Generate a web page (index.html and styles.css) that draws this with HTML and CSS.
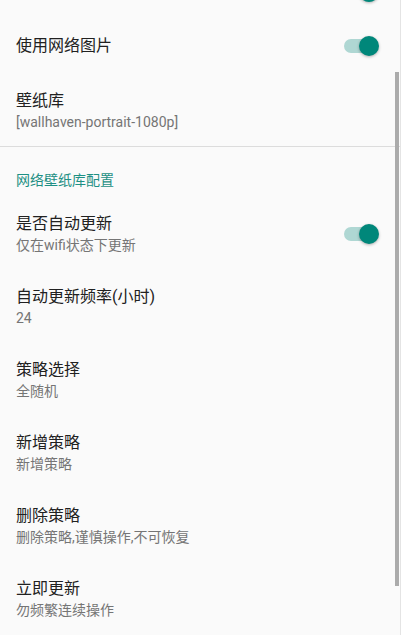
FILE: index.html
```html
<!DOCTYPE html>
<html lang="zh-CN">
<head>
    <meta charset="UTF-8">
    <meta name="viewport" content="width=device-width, initial-scale=1.0">
    <title>设置</title>
    <link rel="stylesheet" href="styles.css">
</head>
<body>
    <div class="screen">
        <div class="prefs">
            <!-- row scrolled above the top edge, only its switch peeks in -->
            <div class="pref single hidden-top">
                <div class="text"></div>
                <div class="switch on"><span class="track"></span><span class="thumb"></span></div>
            </div>

            <div class="pref single">
                <div class="text"><div class="title">使用网络图片</div></div>
                <div class="switch on"><span class="track"></span><span class="thumb"></span></div>
            </div>

            <div class="pref last">
                <div class="text">
                    <div class="title">壁纸库</div>
                    <div class="summary">[wallhaven-portrait-1080p]</div>
                </div>
            </div>

            <div class="divider"></div>

            <div class="category">网络壁纸库配置</div>

            <div class="pref">
                <div class="text">
                    <div class="title">是否自动更新</div>
                    <div class="summary">仅在wifi状态下更新</div>
                </div>
                <div class="switch on"><span class="track"></span><span class="thumb"></span></div>
            </div>

            <div class="pref">
                <div class="text">
                    <div class="title">自动更新频率(小时)</div>
                    <div class="summary">24</div>
                </div>
            </div>

            <div class="pref">
                <div class="text">
                    <div class="title">策略选择</div>
                    <div class="summary">全随机</div>
                </div>
            </div>

            <div class="pref">
                <div class="text">
                    <div class="title">新增策略</div>
                    <div class="summary">新增策略</div>
                </div>
            </div>

            <div class="pref">
                <div class="text">
                    <div class="title">删除策略</div>
                    <div class="summary">删除策略,谨慎操作,不可恢复</div>
                </div>
            </div>

            <div class="pref">
                <div class="text">
                    <div class="title">立即更新</div>
                    <div class="summary">勿频繁连续操作</div>
                </div>
            </div>
        </div>

        <div class="scrollbar"></div>
    </div>
</body>
</html>
```

FILE: styles.css
```css
* {
    margin: 0;
    padding: 0;
    box-sizing: border-box;
}

html, body {
    height: 100%;
    overflow: hidden;
}

body {
    background: #fafafa;
    font-family: Roboto, "Noto Sans CJK SC", sans-serif;
    color: #212121;
}

.screen {
    position: relative;
    width: 401px;
    height: 635px;
    overflow: hidden;
    border-right: 1px solid #e4e4e4;
}

.prefs {
    display: flex;
    flex-direction: column;
}

.pref {
    display: flex;
    align-items: center;
    height: 73px;
    padding: 0 21px 0 16px;
}

.pref.single {
    height: 56px;
}

.pref.hidden-top {
    margin-top: -38px;
}

.pref.hidden-top .switch {
    margin-top: 4px;
}

.pref.last {
    height: 72px;
    align-items: flex-start;
    padding-top: 16px;
}

.text {
    flex: 1;
}

.title {
    font-size: 16px;
    line-height: 22px;
    color: #212121;
}

.summary {
    font-size: 14px;
    line-height: 20px;
    color: #757575;
}

.divider {
    height: 1px;
    background: #dcdcdc;
}

.category {
    font-size: 14px;
    line-height: 20px;
    padding: 23px 16px 7px;
    color: #1e9084;
}

.switch {
    position: relative;
    width: 35px;
    height: 20px;
}

.switch .track {
    position: absolute;
    left: 0;
    top: 3px;
    width: 34px;
    height: 14px;
    border-radius: 7px;
    background: #afd7d3;
}

.switch .thumb {
    position: absolute;
    right: 0;
    top: 0;
    width: 20px;
    height: 20px;
    border-radius: 50%;
    background: #00877a;
    box-shadow: 0 1px 3px rgba(0, 0, 0, 0.3);
}

.scrollbar {
    position: absolute;
    right: 1px;
    top: 72px;
    width: 4px;
    height: 514px;
    background: #ababab;
}
```
